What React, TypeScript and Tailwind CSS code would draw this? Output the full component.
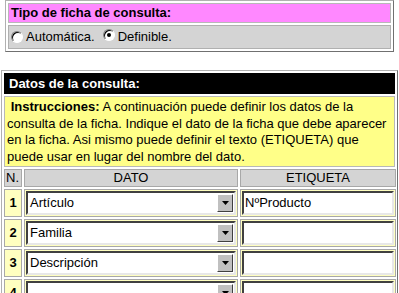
const rows = [
  { n: '1', dato: 'Artículo', etiqueta: 'NºProducto' },
  { n: '2', dato: 'Familia', etiqueta: '' },
  { n: '3', dato: 'Descripción', etiqueta: '' },
  { n: '4', dato: '', etiqueta: '' },
]

function Radio({ checked }: { checked?: boolean }) {
  return (
    <span className="relative inline-block w-[12px] h-[12px] rounded-full border border-t-[#808080] border-l-[#808080] border-b-white border-r-white bg-white shadow-[inset_1px_1px_0_#000]">
      {checked && <span className="absolute left-[3px] top-[3px] w-[4px] h-[4px] rounded-full bg-black" />}
    </span>
  )
}

function Select({ value }: { value: string }) {
  return (
    <div className="flex h-[24px] items-stretch bg-white border-2 border-t-[#404040] border-l-[#404040] border-b-[#e8e8e8] border-r-[#e8e8e8]">
      <span className="flex-1 pl-[2px] leading-[20px]">{value}</span>
      <span className="my-[1px] mr-[1px] w-[16px] flex items-center justify-center bg-[#c0c0c0] border border-t-white border-l-white border-b-[#404040] border-r-[#404040]">
        <svg width="7" height="4" viewBox="0 0 7 4"><path d="M0 0h7L3.5 4z" fill="#000" /></svg>
      </span>
    </div>
  )
}

function TextInput({ value }: { value: string }) {
  return (
    <div className="h-[24px] bg-white border-2 border-t-[#404040] border-l-[#404040] border-b-[#e8e8e8] border-r-[#e8e8e8] pl-[1px] leading-[20px]">
      {value}
    </div>
  )
}

export default function App() {
  return (
    <div className="w-[399px] h-[293px] overflow-hidden bg-white text-[13px] text-black font-['Liberation_Sans',Arial,sans-serif]">
      <div className="ml-[5px] w-[389px] border border-t-[#b0b0b0] border-l-[#b0b0b0] border-b-[#707070] border-r-[#707070] p-[2px] flex flex-col gap-[2px]">
        <div className="h-[20px] bg-[#ff88ff] border border-[#b8b8b8] pl-[2px] font-bold leading-[18px]">
          Tipo de ficha de consulta:
        </div>
        <div className="h-[24px] bg-[#d4d4d4] border border-[#b0b0b0] flex items-center pl-[2px]">
          <Radio />
          <span className="ml-[3px]">Automática.</span>
          <span className="ml-[8px]"><Radio checked /></span>
          <span className="ml-[3px]">Definible.</span>
        </div>
      </div>

      <div className="mt-[18px] ml-[1px] w-[397px] border border-t-[#b0b0b0] border-l-[#b0b0b0] border-b-[#707070] border-r-[#707070] p-[2px] flex flex-col gap-[2px]">
        <div className="h-[21px] bg-black text-white font-bold pl-[5px] leading-[21px]">
          Datos de la consulta:
        </div>
        <div className="h-[71px] bg-[#ffff88] border border-[#b8b8b8] pl-[2px] pt-[2px] leading-[16.5px]">
          &nbsp;<b>Instrucciones:</b> A continuación puede definir los datos de la consulta de la ficha. Indique el dato de la ficha que debe aparecer en la ficha. Asi mismo puede definir el texto (ETIQUETA) que puede usar en lugar del nombre del dato.
        </div>
        <div className="grid grid-cols-[18px_214px_156px] gap-x-[2px] gap-y-[2px]">
          <div className="h-[18px] bg-[#d4d4d4] border border-[#a8a8a8] leading-[16px] pl-[1px]">N.</div>
          <div className="h-[18px] bg-[#d4d4d4] border border-[#a8a8a8] leading-[16px] text-center">DATO</div>
          <div className="h-[18px] bg-[#d4d4d4] border border-[#a8a8a8] leading-[16px] text-center">ETIQUETA</div>
          {rows.map((r) => (
            <>
              <div key={r.n + 'n'} className="h-[28px] bg-[#ffffc0] border border-[#a8a8a8] font-bold flex items-center justify-center">
                {r.n}
              </div>
              <div key={r.n + 'd'} className="h-[28px] bg-[#ffffc0] border border-[#a8a8a8] p-[1px]">
                <Select value={r.dato} />
              </div>
              <div key={r.n + 'e'} className="h-[28px] bg-[#ffffc0] border border-[#a8a8a8] p-[1px]">
                <TextInput value={r.etiqueta} />
              </div>
            </>
          ))}
        </div>
      </div>
    </div>
  )
}
